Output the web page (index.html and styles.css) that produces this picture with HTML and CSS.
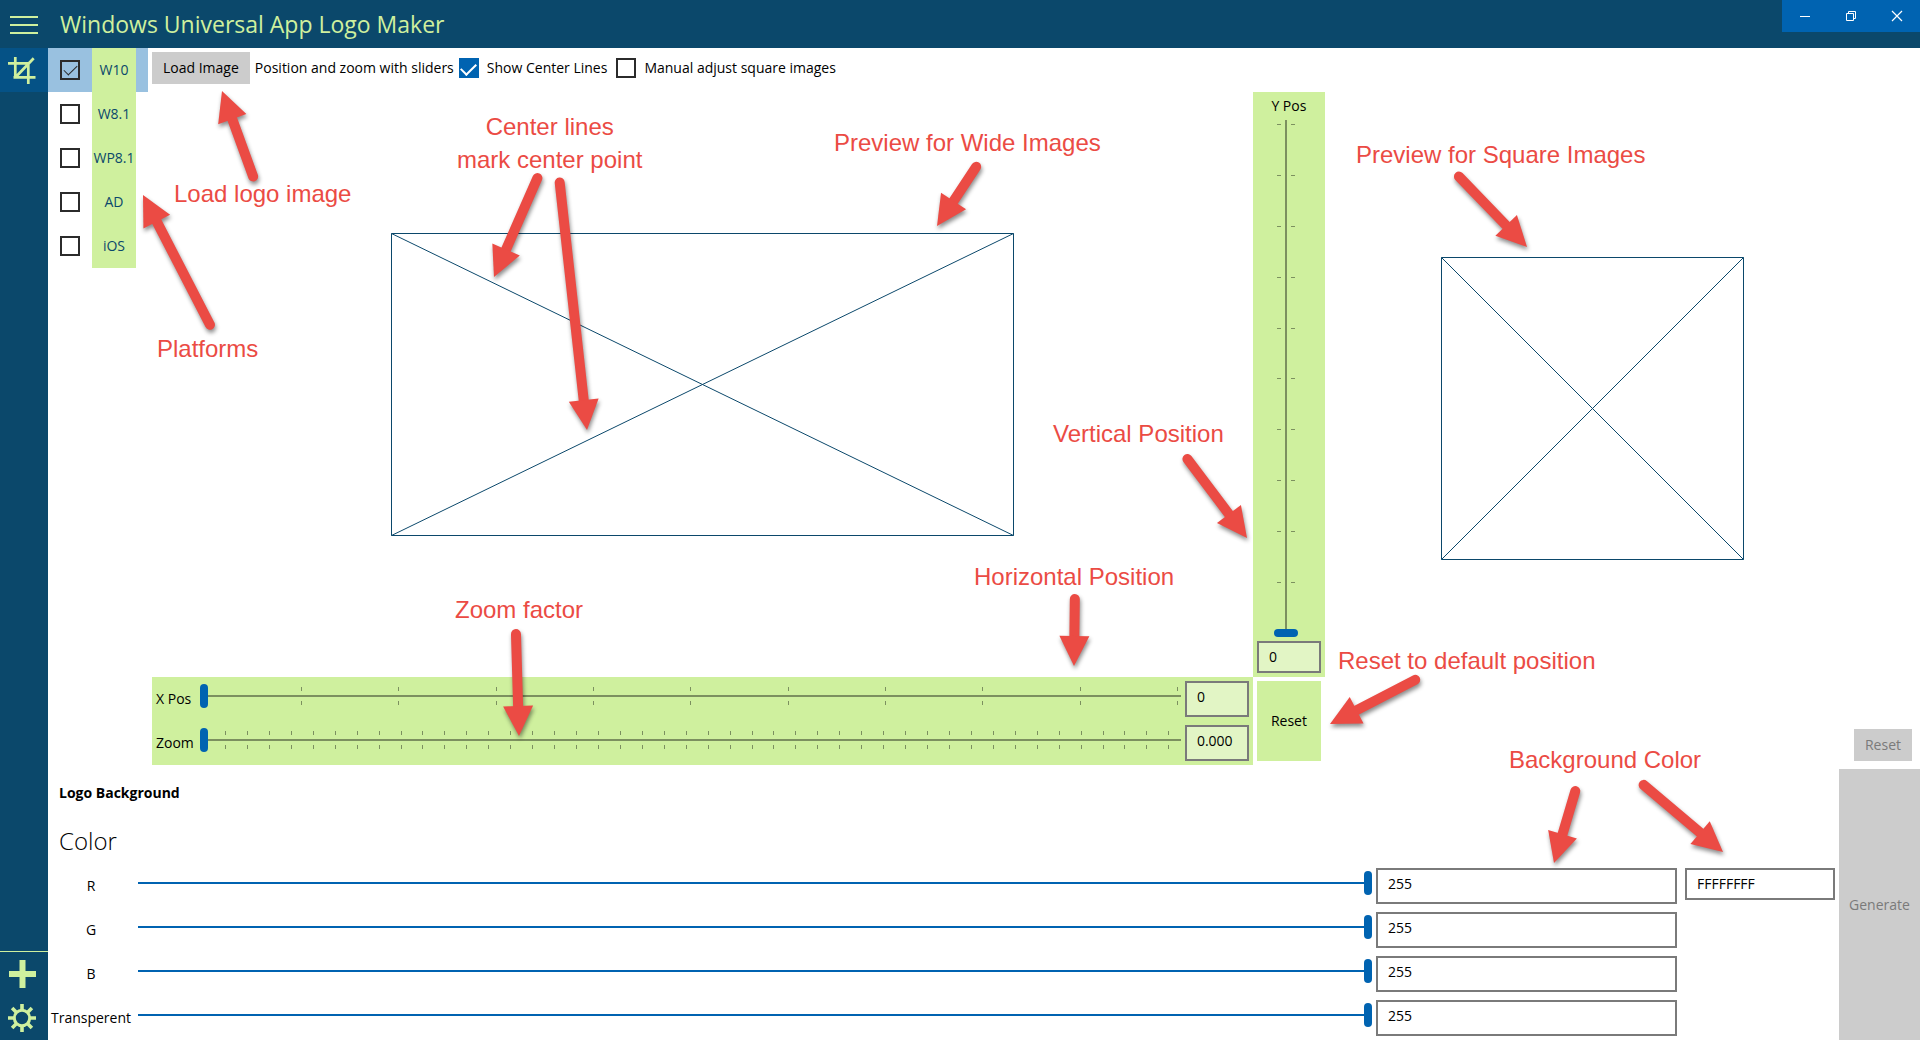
FILE: index.html
```html
<!DOCTYPE html>
<html lang="en">
<head>
<meta charset="utf-8">
<meta name="viewport" content="width=device-width, initial-scale=1">
<title>Windows Universal App Logo Maker</title>
<link rel="stylesheet" href="styles.css">
</head>
<body>
<header class="titlebar">
  <button class="icon-button" type="button" aria-label="Menu">
    <svg width="48" height="48" viewBox="0 0 48 48"><path d="M10 17h28M10 25h28M10 33h28" stroke="currentColor" stroke-width="2"/></svg>
  </button>
  <h1 class="app-title">Windows Universal App Logo Maker</h1>
  <div class="window-controls">
    <button type="button" aria-label="Minimize"><svg width="46" height="32" viewBox="0 0 46 32"><path d="M18 16.500h10" stroke="currentColor"/></svg></button>
    <button type="button" aria-label="Restore"><svg width="46" height="32" viewBox="0 0 46 32"><path d="M18.500 13.500h7v7h-7zM20.500 13v-1.500h7v7h-2" fill="none" stroke="currentColor"/></svg></button>
    <button type="button" aria-label="Close"><svg width="46" height="32" viewBox="0 0 46 32"><path d="M18 11l10 10M28 11l-10 10" stroke="currentColor" stroke-width="1.200"/></svg></button>
  </div>
</header>
<div class="shell">
  <nav class="rail">
    <button class="icon-button is-active" type="button" aria-label="Crop">
      <svg width="48" height="44" viewBox="0 0 48 44"><path d="M8 15.300h21.500M15.300 9v21M13.500 29.300h22M28.300 14v22M33.700 10.300L16 28.800" fill="none" stroke="currentColor" stroke-width="2.700"/></svg>
    </button>
    <div class="rail-bottom">
      <button class="icon-button" type="button" aria-label="Add">
        <svg width="48" height="44" viewBox="0 0 48 44"><path d="M9 22h27M22.500 8v28" stroke="currentColor" stroke-width="6"/></svg>
      </button>
      <button class="icon-button" type="button" aria-label="Settings">
        <svg width="48" height="44" viewBox="0 0 48 44"><g fill="none" stroke="currentColor"><circle cx="22" cy="22" r="7.700" stroke-width="3"/><path stroke-width="3.600" d="M22 8v6M22 30v6M8 22h6M30 22h6M12.100 12.100l4.200 4.200M27.700 27.700l4.200 4.200M31.900 12.100l-4.200 4.200M16.300 27.700l-4.200 4.200"/></g></svg>
      </button>
    </div>
  </nav>
  <main class="content">
    <section class="upper">
      <div class="platforms">
        <label class="platform is-selected"><input class="check" type="checkbox" checked><span>W10</span></label>
        <label class="platform"><input class="check" type="checkbox"><span>W8.1</span></label>
        <label class="platform"><input class="check" type="checkbox"><span>WP8.1</span></label>
        <label class="platform"><input class="check" type="checkbox"><span>AD</span></label>
        <label class="platform"><input class="check" type="checkbox"><span>iOS</span></label>
      </div>
      <div class="workspace">
        <div class="toolbar">
          <button class="button" type="button">Load Image</button>
          <span class="hint">Position and zoom with sliders</span>
          <label class="option"><input class="check check-accent" type="checkbox" checked>Show Center Lines</label>
          <label class="option"><input class="check check-accent" type="checkbox">Manual adjust square images</label>
        </div>
        <div class="stage">
          <div class="preview">
            <svg class="frame-wide" viewBox="0 0 623 303"><path d="M.5.5h622v302H.5zL622.500 302.500M622.500.5L.5 302.500"/></svg>
          </div>
          <div class="y-panel">
            <label for="ypos">Y Pos</label>
            <div class="y-slider">
              <input class="range range-vertical" id="ypos" type="range" min="0" max="100" value="0">
              <div class="ticks ticks-vertical"><i></i><i></i><i></i><i></i><i></i><i></i><i></i><i></i><i></i><i></i></div>
            </div>
            <input class="field" type="text" value="0" aria-label="Y Pos value">
          </div>
          <div class="square-panel">
            <div class="preview">
              <svg class="frame-square" viewBox="0 0 303 303"><path d="M.5.5h302v302H.5zL302.500 302.500M302.500.5L.5 302.500"/></svg>
            </div>
            <button class="button" type="button" disabled>Reset</button>
          </div>
          <div class="x-panel">
            <div class="x-row">
              <label for="xpos">X Pos</label>
              <div class="x-slider">
                <input class="range" id="xpos" type="range" min="0" max="100" value="0">
                <div class="ticks ticks-coarse"><i></i><i></i><i></i><i></i><i></i><i></i><i></i><i></i><i></i><i></i></div>
              </div>
              <input class="field" type="text" value="0" aria-label="X Pos value">
            </div>
            <div class="x-row">
              <label for="zoom">Zoom</label>
              <div class="x-slider">
                <input class="range" id="zoom" type="range" min="0" max="100" value="0">
                <div class="ticks ticks-fine"><i></i><i></i><i></i><i></i><i></i><i></i><i></i><i></i><i></i><i></i><i></i><i></i><i></i><i></i><i></i><i></i><i></i><i></i><i></i><i></i><i></i><i></i><i></i><i></i><i></i><i></i><i></i><i></i><i></i><i></i><i></i><i></i><i></i><i></i><i></i><i></i><i></i><i></i><i></i><i></i><i></i><i></i><i></i><i></i></div>
              </div>
              <input class="field" type="text" value="0.000" aria-label="Zoom value">
            </div>
          </div>
          <button class="reset" type="button">Reset</button>
        </div>
      </div>
    </section>
    <section class="lower">
      <div class="background">
        <h2>Logo Background</h2>
        <h3>Color</h3>
        <div class="channel">
          <label for="red">R</label>
          <input class="range range-full" id="red" type="range" min="0" max="255" value="255">
          <input class="field" type="text" value="255" aria-label="R value">
          <input class="field field-hex" type="text" value="FFFFFFFF" aria-label="Hex color">
        </div>
        <div class="channel">
          <label for="green">G</label>
          <input class="range range-full" id="green" type="range" min="0" max="255" value="255">
          <input class="field" type="text" value="255" aria-label="G value">
        </div>
        <div class="channel">
          <label for="blue">B</label>
          <input class="range range-full" id="blue" type="range" min="0" max="255" value="255">
          <input class="field" type="text" value="255" aria-label="B value">
        </div>
        <div class="channel">
          <label for="alpha">Transperent</label>
          <input class="range range-full" id="alpha" type="range" min="0" max="255" value="255">
          <input class="field" type="text" value="255" aria-label="Transperent value">
        </div>
      </div>
      <button class="generate" type="button" disabled>Generate</button>
    </section>
  </main>
</div>

<div class="notes">
  <svg class="arrows" width="1920" height="1040" viewBox="0 0 1920 1040">
    <defs><path id="head" d="M0 0L-30-15V15z"/></defs>
    <g transform="translate(222 91) rotate(-110)"><path d="M-91 0h63"/><use href="#head"/></g>
    <g transform="translate(143 195) rotate(-117.300)"><path d="M-146 0h118"/><use href="#head"/></g>
    <g transform="translate(494 277) rotate(113.700)"><path d="M-108 0h80"/><use href="#head"/></g>
    <g transform="translate(587 430) rotate(83.700)"><path d="M-249 0h221"/><use href="#head"/></g>
    <g transform="translate(937 226) rotate(123.500)"><path d="M-71 0h43"/><use href="#head"/></g>
    <g transform="translate(1527 247) rotate(46)"><path d="M-98 0h70"/><use href="#head"/></g>
    <g transform="translate(1247 538) rotate(53)"><path d="M-99 0h71"/><use href="#head"/></g>
    <g transform="translate(1074 666) rotate(90.700)"><path d="M-67 0h39"/><use href="#head"/></g>
    <g transform="translate(519 736) rotate(88.300)"><path d="M-102 0h74"/><use href="#head"/></g>
    <g transform="translate(1330 724) rotate(152.600)"><path d="M-96 0h68"/><use href="#head"/></g>
    <g transform="translate(1554 863) rotate(106.500)"><path d="M-75 0h47"/><use href="#head"/></g>
    <g transform="translate(1723 852) rotate(40.200)"><path d="M-104 0h76"/><use href="#head"/></g>
  </svg>
  <p class="note note-load">Load logo image</p>
  <p class="note note-platforms">Platforms</p>
  <p class="note note-center">Center lines<br>mark center point</p>
  <p class="note note-wide">Preview for Wide Images</p>
  <p class="note note-square">Preview for Square Images</p>
  <p class="note note-vertical">Vertical Position</p>
  <p class="note note-horizontal">Horizontal Position</p>
  <p class="note note-zoom">Zoom factor</p>
  <p class="note note-reset">Reset to default position</p>
  <p class="note note-color">Background Color</p>
</div>
</body>
</html>
```
FILE: styles.css
```css
:root {
  --navy: #0b486b;
  --lime: #cff09e;
  --accent: #0063b1;
  --gray: #cccccc;
  --border: #7a7a7a;
  --note: #eb4b44;
}

* {
  box-sizing: border-box;
}

body {
  position: relative;
  display: flex;
  flex-direction: column;
  min-height: 100vh;
  margin: 0;
  background: #fff;
  color: #000;
  font: 14px/20px "Open Sans", "Noto Sans", sans-serif;
}

button,
input {
  margin: 0;
  padding: 0;
  border: 0;
  border-radius: 0;
  font: inherit;
  color: inherit;
}

svg {
  display: block;
}

/* Title bar */
.titlebar {
  display: flex;
  height: 48px;
  background: var(--navy);
  color: var(--lime);
}

.icon-button {
  background: none;
}

.app-title {
  flex: 1;
  margin: 0;
  padding-left: 12px;
  font-size: 23px;
  font-weight: 400;
  line-height: 48px;
}

.window-controls {
  display: flex;
  height: 32px;
  background: var(--accent);
  color: #fff;
}

.window-controls button {
  background: none;
}

/* Side rail */
.shell {
  display: flex;
  flex: 1;
}

.rail {
  display: flex;
  flex-direction: column;
  justify-content: space-between;
  width: 48px;
  background: var(--navy);
  color: var(--lime);
}

.rail .is-active {
  background: #055286;
}

.rail-bottom {
  display: grid;
  border-top: 1px solid var(--lime);
}

.content {
  display: flex;
  flex: 1;
  flex-direction: column;
  gap: 4px;
  min-width: 0;
}

.upper {
  display: flex;
  flex: 1;
  gap: 4px;
}

/* Platforms */
.platforms {
  width: 100px;
}

.platform {
  display: flex;
  align-items: center;
  height: 44px;
  padding-left: 12px;
  gap: 12px;
  color: var(--navy);
}

.platform.is-selected {
  background: #99c1e0;
}

.platform span {
  width: 44px;
  background: var(--lime);
  line-height: 44px;
  text-align: center;
}

.check {
  display: grid;
  place-items: center;
  flex: none;
  width: 20px;
  height: 20px;
  border: 2px solid #2b2b2b;
  appearance: none;
}

.check:checked::after {
  width: 6px;
  height: 12px;
  margin-bottom: 5px;
  border: solid #2b2b2b;
  border-width: 0 1px 1px 0;
  content: "";
  transform: rotate(45deg);
}

.check-accent:checked {
  border-color: var(--accent);
  background: var(--accent);
}

.check-accent:checked::after {
  width: 7px;
  height: 13px;
  border-color: #fff;
  border-width: 0 2px 2px 0;
}

/* Toolbar */
.workspace {
  display: flex;
  flex: 1;
  flex-direction: column;
}

.toolbar {
  display: flex;
  align-items: center;
  gap: 5px;
  height: 40px;
  margin-bottom: 4px;
}

.button {
  height: 32px;
  padding: 0 11px;
  background: var(--gray);
}

.button:disabled,
.generate:disabled {
  color: var(--border);
}

.option {
  display: flex;
  align-items: center;
  gap: 8px;
  margin-right: 4px;
}

/* Previews and position sliders */
.stage {
  display: grid;
  flex: 1;
  grid-template-columns: 1.85fr 72px 1fr;
  grid-template-rows: 1fr 88px;
}

.preview {
  display: flex;
  flex: 1;
  align-items: center;
  justify-content: center;
}

.preview path {
  fill: none;
  stroke: var(--navy);
}

.frame-wide {
  width: 623px;
}

.frame-square {
  width: 303px;
}

.square-panel {
  display: flex;
  flex-direction: column;
  grid-row: span 2;
  gap: 4px;
  padding: 0 8px 4px 0;
}

.square-panel .preview {
  padding-right: 52px;
}

.square-panel .button {
  align-self: flex-end;
}

.y-panel {
  display: flex;
  flex-direction: column;
  gap: 4px;
  padding: 4px;
  background: var(--lime);
  text-align: center;
}

.y-slider {
  display: grid;
  flex: 1;
  justify-items: center;
  padding-right: 6px;
}

.x-slider {
  display: grid;
  height: 30px;
  margin-right: 4px;
}

.x-slider > *,
.y-slider > * {
  grid-area: 1 / 1;
}

.x-panel {
  background: var(--lime);
}

.x-row {
  display: grid;
  grid-template-columns: 44px 1fr 64px;
  height: 44px;
  padding: 4px;
}

.x-row label {
  line-height: 36px;
}

.ticks {
  display: flex;
  justify-content: space-between;
  pointer-events: none;
}

.ticks i {
  width: 1px;
  height: 18px;
  margin-top: 6px;
  background: linear-gradient(#7c905f 0 4px, transparent 4px 14px, #7c905f 14px);
}

.ticks-coarse {
  padding: 0 3px 0 101px;
}

.ticks-fine {
  padding: 0 11px 0 25px;
}

.ticks-vertical {
  flex-direction: column;
  padding: 4px 0 54px;
}

.ticks-vertical i {
  width: 18px;
  height: 1px;
  margin: 0;
  background: linear-gradient(90deg, #7c905f 0 4px, transparent 4px 14px, #7c905f 14px);
}

.reset {
  margin: 4px;
  background: var(--lime);
}

.range {
  width: 100%;
  height: 30px;
  background: none;
  appearance: none;
}

.range::-webkit-slider-runnable-track {
  height: 2px;
  background: #7c905f;
}

.range::-webkit-slider-thumb {
  width: 8px;
  height: 24px;
  margin-top: -11px;
  border-radius: 4px;
  background: var(--accent);
  appearance: none;
}

.range-full::-webkit-slider-runnable-track {
  background: var(--accent);
}

.range-vertical {
  width: 24px;
  height: 100%;
  direction: rtl;
  writing-mode: vertical-lr;
}

.range-vertical::-webkit-slider-runnable-track {
  width: 2px;
  height: 100%;
}

.range-vertical::-webkit-slider-thumb {
  width: 24px;
  height: 8px;
  margin: 0 0 0 -11px;
}

.field {
  width: 100%;
  height: 36px;
  padding: 0 10px 6px;
  border: 2px solid var(--border);
  background: #fff;
}

.x-panel .field,
.y-panel .field {
  background: #e2f5c5;
}

.y-panel .field,
.field-hex {
  height: 32px;
  padding-bottom: 2px;
}

/* Background color */
.lower {
  display: flex;
}

.background {
  flex: 1;
  padding-right: 4px;
}

.background h2,
.background h3 {
  margin: 0;
  padding-left: 11px;
}

.background h2 {
  font-size: 14px;
  font-weight: 700;
  line-height: 48px;
}

.background h3 {
  font-size: 24px;
  font-weight: 300;
  line-height: 47px;
}

.channel {
  display: grid;
  grid-template-columns: 86px 1fr 301px 154px;
  column-gap: 4px;
  height: 44px;
  padding: 4px 0;
}

.channel label {
  line-height: 36px;
  text-align: center;
}

.channel .field-hex {
  width: 150px;
  justify-self: end;
}

.generate {
  width: 81px;
  background: var(--gray);
}

/* Explanatory notes laid over the window */
.notes {
  position: absolute;
  inset: 0;
  overflow: hidden;
  pointer-events: none;
}

.arrows {
  position: absolute;
  top: 0;
  left: 0;
  fill: var(--note);
  stroke: var(--note);
  stroke-width: 10;
  stroke-linecap: round;
  filter: drop-shadow(1px 3px 2px rgb(0 0 0 / 45%));
}

.arrows use {
  stroke: none;
}

.note {
  position: absolute;
  margin: 0;
  color: var(--note);
  font: 24px/33px "Liberation Sans", Arial, sans-serif;
  white-space: nowrap;
}

.note-load { top: 177px; left: 174px; }
.note-platforms { top: 332px; left: 157px; }
.note-center { top: 110px; left: 457px; text-align: center; }
.note-wide { top: 126px; left: 834px; }
.note-square { top: 138px; left: 1356px; }
.note-vertical { top: 417px; left: 1053px; }
.note-horizontal { top: 560px; left: 974px; }
.note-zoom { top: 593px; left: 455px; }
.note-reset { top: 644px; left: 1338px; }
.note-color { top: 743px; left: 1509px; }
```
